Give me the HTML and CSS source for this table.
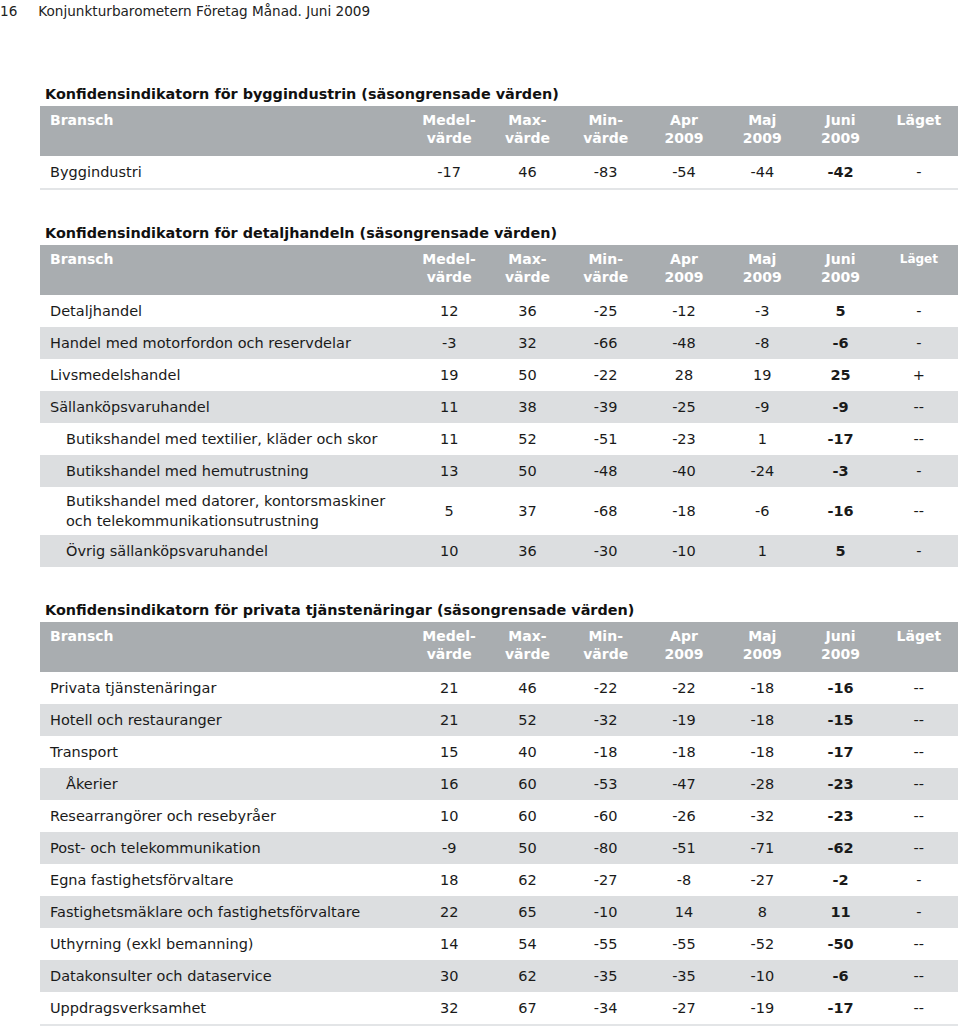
FILE: index.html
```html
<!DOCTYPE html>
<html lang="sv">
<head>
<meta charset="utf-8">
<title>Konjunkturbarometern</title>
<link rel="stylesheet" href="styles.css">
</head>
<body>
<div class="page">
  <div class="running-head"><span class="pageno">16</span><span>Konjunkturbarometern Företag Månad. Juni 2009</span></div>

  <section class="block first">
    <h2 class="title">Konfidensindikatorn för byggindustrin (säsongrensade värden)</h2>
    <div class="tbl">
      <div class="row head">
        <div class="c name">Bransch</div><div class="c">Medel-<br>värde</div><div class="c">Max-<br>värde</div><div class="c">Min-<br>värde</div><div class="c">Apr<br>2009</div><div class="c">Maj<br>2009</div><div class="c">Juni<br>2009</div><div class="c">Läget</div>
      </div>
      <div class="row last"><div class="c name">Byggindustri</div><div class="c">-17</div><div class="c">46</div><div class="c">-83</div><div class="c">-54</div><div class="c">-44</div><div class="c b">-42</div><div class="c">-</div></div>
    </div>
  </section>

  <section class="block">
    <h2 class="title">Konfidensindikatorn för detaljhandeln (säsongrensade värden)</h2>
    <div class="tbl">
      <div class="row head">
        <div class="c name">Bransch</div><div class="c">Medel-<br>värde</div><div class="c">Max-<br>värde</div><div class="c">Min-<br>värde</div><div class="c">Apr<br>2009</div><div class="c">Maj<br>2009</div><div class="c">Juni<br>2009</div><div class="c small">Läget</div>
      </div>
      <div class="row"><div class="c name">Detaljhandel</div><div class="c">12</div><div class="c">36</div><div class="c">-25</div><div class="c">-12</div><div class="c">-3</div><div class="c b">5</div><div class="c">-</div></div>
      <div class="row alt"><div class="c name">Handel med motorfordon och reservdelar</div><div class="c">-3</div><div class="c">32</div><div class="c">-66</div><div class="c">-48</div><div class="c">-8</div><div class="c b">-6</div><div class="c">-</div></div>
      <div class="row"><div class="c name">Livsmedelshandel</div><div class="c">19</div><div class="c">50</div><div class="c">-22</div><div class="c">28</div><div class="c">19</div><div class="c b">25</div><div class="c">+</div></div>
      <div class="row alt"><div class="c name">Sällanköpsvaruhandel</div><div class="c">11</div><div class="c">38</div><div class="c">-39</div><div class="c">-25</div><div class="c">-9</div><div class="c b">-9</div><div class="c">--</div></div>
      <div class="row"><div class="c name sub">Butikshandel med textilier, kläder och skor</div><div class="c">11</div><div class="c">52</div><div class="c">-51</div><div class="c">-23</div><div class="c">1</div><div class="c b">-17</div><div class="c">--</div></div>
      <div class="row alt"><div class="c name sub">Butikshandel med hemutrustning</div><div class="c">13</div><div class="c">50</div><div class="c">-48</div><div class="c">-40</div><div class="c">-24</div><div class="c b">-3</div><div class="c">-</div></div>
      <div class="row tall"><div class="c name sub">Butikshandel med datorer, kontorsmaskiner<br>och telekommunikationsutrustning</div><div class="c">5</div><div class="c">37</div><div class="c">-68</div><div class="c">-18</div><div class="c">-6</div><div class="c b">-16</div><div class="c">--</div></div>
      <div class="row alt"><div class="c name sub">Övrig sällanköpsvaruhandel</div><div class="c">10</div><div class="c">36</div><div class="c">-30</div><div class="c">-10</div><div class="c">1</div><div class="c b">5</div><div class="c">-</div></div>
    </div>
  </section>

  <section class="block">
    <h2 class="title">Konfidensindikatorn för privata tjänstenäringar (säsongrensade värden)</h2>
    <div class="tbl">
      <div class="row head">
        <div class="c name">Bransch</div><div class="c">Medel-<br>värde</div><div class="c">Max-<br>värde</div><div class="c">Min-<br>värde</div><div class="c">Apr<br>2009</div><div class="c">Maj<br>2009</div><div class="c">Juni<br>2009</div><div class="c">Läget</div>
      </div>
      <div class="row"><div class="c name">Privata tjänstenäringar</div><div class="c">21</div><div class="c">46</div><div class="c">-22</div><div class="c">-22</div><div class="c">-18</div><div class="c b">-16</div><div class="c">--</div></div>
      <div class="row alt"><div class="c name">Hotell och restauranger</div><div class="c">21</div><div class="c">52</div><div class="c">-32</div><div class="c">-19</div><div class="c">-18</div><div class="c b">-15</div><div class="c">--</div></div>
      <div class="row"><div class="c name">Transport</div><div class="c">15</div><div class="c">40</div><div class="c">-18</div><div class="c">-18</div><div class="c">-18</div><div class="c b">-17</div><div class="c">--</div></div>
      <div class="row alt"><div class="c name sub">Åkerier</div><div class="c">16</div><div class="c">60</div><div class="c">-53</div><div class="c">-47</div><div class="c">-28</div><div class="c b">-23</div><div class="c">--</div></div>
      <div class="row"><div class="c name">Researrangörer och resebyråer</div><div class="c">10</div><div class="c">60</div><div class="c">-60</div><div class="c">-26</div><div class="c">-32</div><div class="c b">-23</div><div class="c">--</div></div>
      <div class="row alt"><div class="c name">Post- och telekommunikation</div><div class="c">-9</div><div class="c">50</div><div class="c">-80</div><div class="c">-51</div><div class="c">-71</div><div class="c b">-62</div><div class="c">--</div></div>
      <div class="row"><div class="c name">Egna fastighetsförvaltare</div><div class="c">18</div><div class="c">62</div><div class="c">-27</div><div class="c">-8</div><div class="c">-27</div><div class="c b">-2</div><div class="c">-</div></div>
      <div class="row alt"><div class="c name">Fastighetsmäklare och fastighetsförvaltare</div><div class="c">22</div><div class="c">65</div><div class="c">-10</div><div class="c">14</div><div class="c">8</div><div class="c b">11</div><div class="c">-</div></div>
      <div class="row"><div class="c name">Uthyrning (exkl bemanning)</div><div class="c">14</div><div class="c">54</div><div class="c">-55</div><div class="c">-55</div><div class="c">-52</div><div class="c b">-50</div><div class="c">--</div></div>
      <div class="row alt"><div class="c name">Datakonsulter och dataservice</div><div class="c">30</div><div class="c">62</div><div class="c">-35</div><div class="c">-35</div><div class="c">-10</div><div class="c b">-6</div><div class="c">--</div></div>
      <div class="row last"><div class="c name">Uppdragsverksamhet</div><div class="c">32</div><div class="c">67</div><div class="c">-34</div><div class="c">-27</div><div class="c">-19</div><div class="c b">-17</div><div class="c">--</div></div>
    </div>
  </section>
</div>
</body>
</html>
```

FILE: styles.css
```css
html, body {
  margin: 0;
  padding: 0;
  background: #ffffff;
}

body {
  font-family: "DejaVu Sans", Verdana, sans-serif;
  font-size: 14.5px;
  color: #1a1a1a;
}

.page {
  width: 960px;
}

.running-head {
  display: flex;
  gap: 21px;
  height: 21px;
  align-items: center;
  font-size: 13.6px;
  color: #222;
}

.block {
  margin-left: 40px;
  width: 918px;
}

.block.first {
  margin-top: 64px;
}

.block + .block {
  margin-top: 34px;
}

.title {
  margin: 0 0 3px 5px;
  font-size: 14.4px;
  font-weight: bold;
  line-height: 18px;
  color: #111;
}

.tbl {
  display: flex;
  flex-direction: column;
}

.row {
  display: grid;
  grid-template-columns: 370px repeat(7, 1fr);
  height: 32px;
  align-items: center;
}

.row.alt {
  background: #dcdee0;
}

.row.tall {
  height: 48px;
}

.row.last {
  border-bottom: 2px solid #e3e5e7;
}

.c {
  text-align: center;
  line-height: 20px;
}

.c.name {
  text-align: left;
  padding-left: 10px;
}

.c.name.sub {
  padding-left: 26px;
}

.c.b {
  font-weight: bold;
}

.row.head {
  background: #a9adb0;
  color: #ffffff;
  font-weight: bold;
  font-size: 14px;
  height: 50px;
  align-items: start;
  padding-top: 5px;
  box-sizing: border-box;
}

.row.head .c {
  line-height: 18px;
}

.row.head .c.small {
  font-size: 12px;
}
```
